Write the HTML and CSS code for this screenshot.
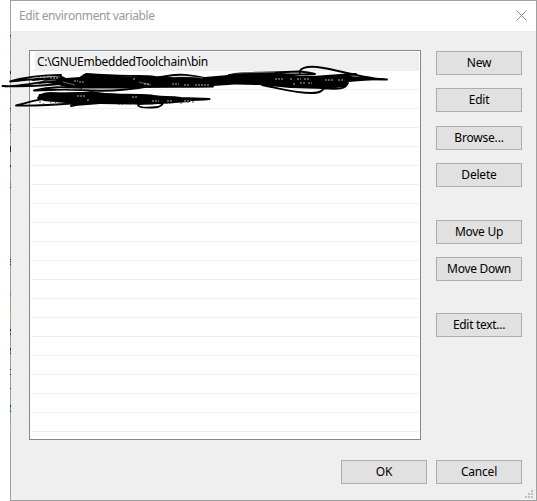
FILE: index.html
```html
<!DOCTYPE html>
<html lang="en">
<head>
<meta charset="utf-8">
<title>Edit environment variable</title>
<link rel="stylesheet" href="styles.css">
</head>
<body>
<main class="dialog">
  <header class="titlebar">
    <span class="title">Edit environment variable</span>
    <svg class="close" width="11" height="11" viewBox="0 0 11 11"><path d="M.5.5l10 10M10.5.5l-10 10"/></svg>
  </header>
  <section class="content">
    <div class="list"><div class="selected"><span class="path">C:\GNUEmbeddedToolchain\bin</span></div></div>
    <div class="actions">
      <button>New</button>
      <button>Edit</button>
      <button class="browse">Browse...</button>
      <button>Delete</button>
      <button class="group move">Move Up</button>
      <button class="move">Move Down</button>
      <button class="text">Edit text...</button>
    </div>
  </section>
  <footer class="footer"><button>OK</button><button>Cancel</button></footer>
  <svg class="grip" width="8" height="8" viewBox="0 0 8 8"><path d="M6 0h2v2H6zM3 3h2v2H3zM6 3h2v2H6zM0 6h2v2H0zM3 6h2v2H3zM6 6h2v2H6z"/></svg>
</main>
<svg class="edge" width="1" height="501" viewBox="0 0 1 501">
  <path stroke="#4d9dba" d="M.5 36v2M.5 53v2M.5 91v2M.5 109v4M.5 125v8M.5 182v4M.5 262v3M.5 291v5M.5 331v3M.5 350v3M.5 407v4"/>
  <path stroke="#222b50" d="M.5 35v1M.5 71v3M.5 108v1M.5 124v1M.5 129v1M.5 146v6M.5 165v2M.5 187v1M.5 259v1M.5 261v1M.5 264v1M.5 329v2M.5 334v1M.5 348v2M.5 353v1M.5 369v1M.5 374v1M.5 388v1M.5 405v2M.5 411v1"/>
  <path stroke="#a9ad6d" d="M.5 186v1M.5 309v9M.5 328v1M.5 347v1M.5 404v1M.5 412v1M.5 424v6"/>
</svg>
<svg class="scribble" width="400" height="115" viewBox="0 0 400 115">
  <g class="ink">
    <path d="M62 76L66 78L80 77L84 74L110 75.500L140 77L170 77L205 77L240 74L280 73L300 76L315 76L350 76L386 79L348 82L345 87L325 89L290 88L260 85L235 84.500L213 86L180 87L155 87.500L130 88.500L84 88.500L66 87L50 83L42 80Z"/>
    <path d="M39 94L55 93L80 92L120 94L150 95L180 98L195 98L190 102L160 104L130 104.500L100 104L75 106L66 103L44 101L38 98Z"/>
  </g>
  <g class="strokes">
    <path d="M61 75C42 75 22 78 10 81.500C26 80 46 77 62 78M2.500 86C25 87 43 86 68 83M5 86.500C24 86 47 81 62 79M33 80L61 77M34 90.500C52 86 65 87 82 88M35 90.500C55 90 57 89 80 90C107 92 130 90 150 86M39 83C57 80 74 87 100 86S151 88 213 86.500"/>
    <path d="M80 78L86 74C105 75 116 76 139 76S150 79 167 76S193 76 204 78M228 76C237 72 260 73 299 71.500C307 72 312 73 315 74C290 76 270 72 229 75"/>
    <path d="M300 74C298 68 307 66 317 67C337 69 363 79 387 79.500C366 79 341 79 326 81M300 77C325 77 343 74 356 74C341 77 331 77 320 78M262 85C283 89 294 93 312 93C321 93 323 90 326 86M321 88C342 90 346 88 348 83"/>
    <path d="M39 98C53 90 78 96 91 92C107 96 128 94 151 95.500C158 98 170 96 181 98L209.500 99C187 101 174 99 163 102"/>
    <path d="M16 105.500C32 102 37 98 55 99M16 105.500C35 106 52 105 76 103M38 98C43 91 54 93 66 94M138 105C139 108 148 108 158 107C164 104 164 103 158 103C151 103 144 104 139 104M71 106L76 105"/>
  </g>
  <g class="glints">
    <path class="loops" d="M47 76L60 77M44 81L56 80M63 82L75 85M69 89L84 89M139 82L151 85M172 77C184 76 194 77 203 78M236 73L275 72"/>
    <path d="M40 77h5M50 78h8M74 81h4M79 82h5M133 79h2M144 84h5M172 84h7M184 85h5M195 85h14M275 79h8M290 79h3M297 79h4M304 79h6M325 80h8M338 80h5M293 84h3M300 83h5M308 83h4M77 96h9M87 100h3M132 97h6M152 101h7M167 101h5M184 101h7"/>
    <path class="traces" d="M40 101v4M42.500 104h2M50 101l2 4M55.500 101v4M59.500 101v4M64 104h5M118 104h6M135 104h3M148 104h5M166 103h7M181 102v2M188 101v2M193 101v2"/>
  </g>
</svg>
</body>
</html>
```
FILE: styles.css
```css
* { box-sizing: border-box; }
body {
  margin: 0;
  background: #fff;
  font: 12px/16px "Noto Sans", sans-serif;
  color: #000;
}
.dialog {
  position: relative;
  width: 527px;
  height: 501px;
  margin-left: 10px;
  border: 1px solid #a0a0a0;
  background: #efefef;
}
.titlebar {
  display: flex;
  justify-content: space-between;
  height: 30px;
  padding: 7px 9px 0 8px;
  background: #fff;
  color: #999;
}
.title { letter-spacing: -.38px; }
.close {
  margin-top: 2px;
  fill: none;
  stroke: #888;
  stroke-width: 1;
}
.content {
  display: flex;
  gap: 15px;
  padding: 19px 0 0 18px;
}
.list {
  width: 392px;
  height: 390px;
  padding: 1px;
  border: 1px solid #828790;
  background: repeating-linear-gradient(#fff 0 18px, #efefef 18px 19px) 1px 1px / 388px 387px no-repeat #fff;
}
.selected {
  height: 18px;
  margin-left: 4px;
  padding: 2px 2px 0;
  background: #efefef;
}
.path {
  display: block;
  letter-spacing: -.3px;
}
.actions {
  display: flex;
  flex-direction: column;
  gap: 13px;
  padding-top: 1px;
}
button {
  width: 86px;
  height: 24px;
  padding: 0 0 1px;
  border: 1px solid #adadad;
  background: #e1e1e1;
  font: inherit;
  color: inherit;
  letter-spacing: -.2px;
}
.browse { margin-top: 1px; }
.move { letter-spacing: -.3px; }
.group { margin-top: 20px; }
.text {
  margin-top: 19px;
  letter-spacing: -.3px;
}
.footer {
  display: flex;
  justify-content: flex-end;
  gap: 9px;
  padding: 20px 14px 0 0;
}
.grip {
  position: absolute;
  right: 3px;
  bottom: 2px;
  fill: #bfbfbf;
}
.edge,
.scribble {
  position: absolute;
  left: 0;
  top: 0;
  pointer-events: none;
}
.edge { left: 10px; }
.ink { fill: #000; }
.strokes {
  fill: none;
  stroke: #000;
  stroke-width: 1.9;
  stroke-linecap: round;
  stroke-linejoin: round;
}
.glints {
  fill: none;
  stroke: #ddd;
  stroke-width: .8;
  stroke-dasharray: 2 1;
}
.loops {
  stroke: #aaa;
  stroke-width: .6;
  stroke-dasharray: none;
}
.traces { stroke: #222; }
```
